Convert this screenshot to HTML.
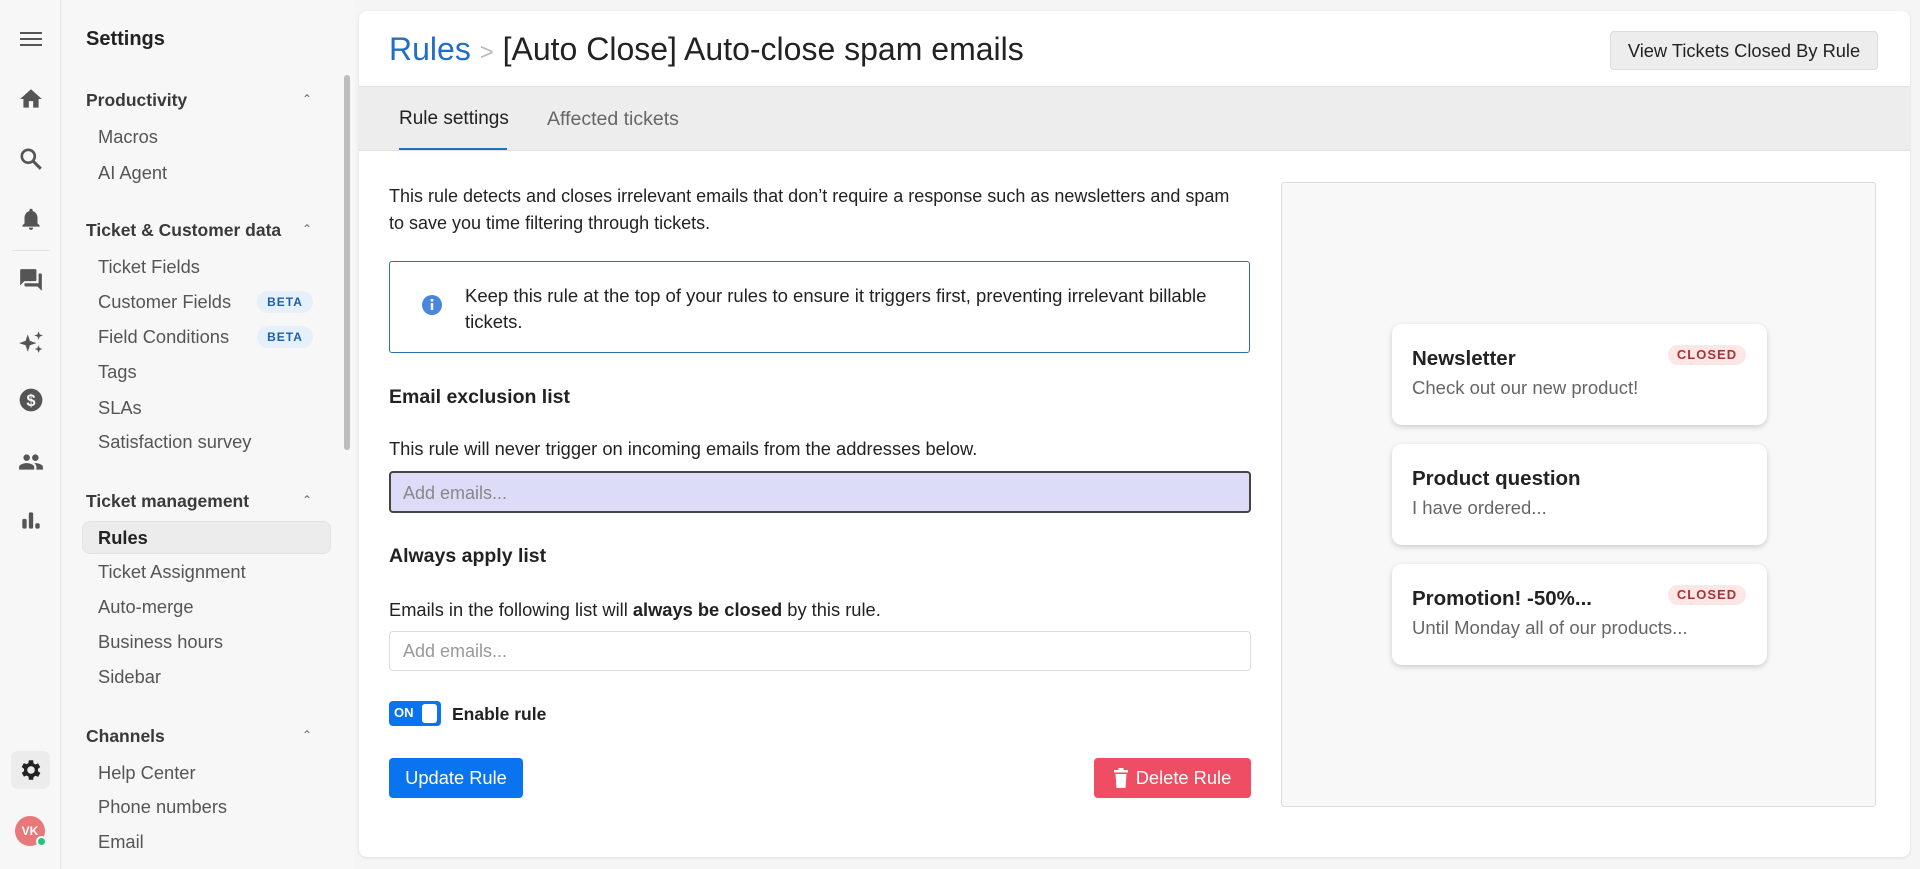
<!DOCTYPE html>
<html><head><meta charset="utf-8"><style>
*{box-sizing:border-box;margin:0;padding:0}
body{width:1920px;height:869px;overflow:hidden;background:#f5f5f5;font-family:"Liberation Sans",sans-serif;color:#1e1e1e;position:relative}
.abs{position:absolute}
.rail{left:0;top:0;width:61px;height:869px;background:#f7f7f7;border-right:1px solid #e6e6e6}
.ic{position:absolute;left:18px;width:26px;height:26px}
.side{left:62px;top:0;width:293px;height:869px;background:#f7f7f7}
.side .h{position:absolute;left:24px;font-size:17.5px;font-weight:bold;color:#3a3a3a;line-height:20px}
.side .i{position:absolute;left:36px;font-size:18.3px;color:#555;line-height:20px}
.chev{position:absolute;left:240px;font-size:12px;color:#666}
.beta{position:absolute;left:195px;width:56px;height:22px;border-radius:11px;background:#e6f0fb;color:#1d5fa8;font-size:12px;font-weight:bold;letter-spacing:1px;text-align:center;line-height:22px}
.card{left:359px;top:11px;width:1551px;height:846px;background:#fff;border-radius:8px;box-shadow:0 1px 3px rgba(0,0,0,.1)}
.btn{position:absolute;border-radius:4px;font-size:18.3px;text-align:center}
.tc{position:absolute;left:1392px;width:375px;height:101px;background:#fff;border-radius:10px;box-shadow:0 2px 6px rgba(0,0,0,.18)}
.tc b{position:absolute;left:20px;top:23px;font-size:20.5px;color:#222}
.tc span{position:absolute;left:20px;top:53px;font-size:18.5px;color:#666}
.tc i{position:absolute;left:276px;top:21px;width:78px;height:20px;border-radius:10px;background:#fde6e6;color:#a33;font-style:normal;font-size:13px;font-weight:bold;letter-spacing:1px;text-align:center;line-height:20px}
</style></head><body>
<div class="abs rail">
<svg class="ic" style="top:26px" viewBox="0 0 26 26"><path d="M2 7h22M2 13h22M2 19h22" stroke="#555" stroke-width="2"/></svg>
<svg class="ic" style="top:86px" viewBox="0 0 24 24"><path d="M10 20v-6h4v6h5v-8h3L12 3 2 12h3v8z" fill="#555"/></svg>
<svg class="ic" style="top:146px" viewBox="0 0 24 24"><circle cx="9.5" cy="9.5" r="6" stroke="#555" stroke-width="2.4" fill="none"/><path d="M14 14l7 7" stroke="#555" stroke-width="2.8"/></svg>
<svg class="ic" style="top:206px" viewBox="0 0 24 24"><path d="M12 22a2 2 0 002-2h-4a2 2 0 002 2zm6-6V11c0-3-1.6-5.6-4.5-6.3V4a1.5 1.5 0 00-3 0v.7C7.6 5.4 6 8 6 11v5l-2 2v1h16v-1z" fill="#555"/></svg>
<div class="abs" style="left:12px;top:250px;width:38px;height:1px;background:#e2e2e2"></div>
<svg class="ic" style="top:267px" viewBox="0 0 24 24"><path d="M21 6h-2v9H6v2c0 .6.4 1 1 1h11l4 4V7c0-.6-.4-1-1-1zm-4 6V3c0-.6-.4-1-1-1H3c-.6 0-1 .4-1 1v14l4-4h10c.6 0 1-.4 1-1z" fill="#555"/></svg>
<svg class="ic" style="top:329px" viewBox="0 0 24 24"><path d="M9 5l2 6 6 2-6 2-2 6-2-6-6-2 6-2zM19 2l1 3 3 1-3 1-1 3-1-3-3-1 3-1zM19 15l1 2.5 2.5 1-2.5 1-1 2.5-1-2.5-2.5-1 2.5-1z" fill="#555"/></svg>
<svg class="ic" style="top:387px" viewBox="0 0 24 24"><circle cx="12" cy="12" r="10.5" fill="#555"/><text x="12" y="17.5" font-size="15" font-weight="bold" fill="#f7f7f7" text-anchor="middle" font-family="Liberation Sans">$</text></svg>
<svg class="ic" style="top:449px" viewBox="0 0 24 24"><path d="M16 11a3 3 0 100-6 3 3 0 000 6zm-8 0a3 3 0 100-6 3 3 0 000 6zm0 2c-2.3 0-7 1.2-7 3.5V19h14v-2.5C15 14.2 10.3 13 8 13zm8 0c-.3 0-.6 0-1 .1 1.2.8 2 2 2 3.4V19h6v-2.5c0-2.3-4.7-3.5-7-3.5z" fill="#555"/></svg>
<svg class="ic" style="top:507px" viewBox="0 0 24 24"><rect x="4" y="11" width="4" height="9" rx="1.5" fill="#555"/><rect x="10" y="5" width="4" height="15" rx="1.5" fill="#555"/><rect x="16" y="15" width="4" height="5" rx="1.5" fill="#555"/></svg>
<div class="abs" style="left:11px;top:751px;width:39px;height:38px;background:#ececec;border-radius:7px"></div>
<svg class="ic" style="top:757px" viewBox="0 0 24 24"><path d="M19.4 13a7.5 7.5 0 000-2l2.1-1.6-2-3.5-2.5 1a7.5 7.5 0 00-1.7-1L15 3h-4l-.4 2.7a7.5 7.5 0 00-1.7 1l-2.5-1-2 3.5L6.6 11a7.5 7.5 0 000 2l-2.1 1.6 2 3.5 2.5-1c.5.4 1.1.7 1.700 1L11 21h4l.4-2.7c.6-.3 1.2-.6 1.7-1l2.5 1 2-3.5zM13 15.5a3.5 3.5 0 110-7 3.5 3.5 0 010 7z" fill="#222" transform="translate(-1 0)"/></svg>
<div class="abs" style="left:15px;top:816px;width:30px;height:30px;border-radius:50%;background:#e8787a;color:#fff;font-size:12px;font-weight:bold;text-align:center;line-height:30px">VK</div>
<div class="abs" style="left:36px;top:836px;width:11px;height:11px;border-radius:50%;background:#22c57a;border:2px solid #f7f7f7"></div>
</div>
<div class="abs side">
<div class="abs" style="left:24px;top:28px;font-size:20px;font-weight:bold;color:#222">Settings</div>
<div class="h" style="top:90px">Productivity</div><div class="chev" style="top:92px">&#8963;</div>
<div class="i" style="top:127px">Macros</div>
<div class="i" style="top:163px">AI Agent</div>
<div class="h" style="top:220px">Ticket &amp; Customer data</div><div class="chev" style="top:222px">&#8963;</div>
<div class="i" style="top:257px">Ticket Fields</div>
<div class="i" style="top:292px">Customer Fields</div><div class="beta" style="top:291px">BETA</div>
<div class="i" style="top:327px">Field Conditions</div><div class="beta" style="top:326px">BETA</div>
<div class="i" style="top:362px">Tags</div>
<div class="i" style="top:398px">SLAs</div>
<div class="i" style="top:432px">Satisfaction survey</div>
<div class="h" style="top:491px">Ticket management</div><div class="chev" style="top:493px">&#8963;</div>
<div class="abs" style="left:20px;top:521px;width:249px;height:33px;background:#ececec;border:1px solid #e2e2e2;border-radius:8px"></div>
<div class="i" style="top:528px;font-weight:bold;color:#222">Rules</div>
<div class="i" style="top:562px">Ticket Assignment</div>
<div class="i" style="top:597px">Auto-merge</div>
<div class="i" style="top:632px">Business hours</div>
<div class="i" style="top:667px">Sidebar</div>
<div class="h" style="top:726px">Channels</div><div class="chev" style="top:728px">&#8963;</div>
<div class="i" style="top:763px">Help Center</div>
<div class="i" style="top:797px">Phone numbers</div>
<div class="i" style="top:832px">Email</div>
<div class="abs" style="left:282px;top:75px;width:6px;height:375px;background:#bdbdbd;border-radius:3px"></div>
</div>
<div class="abs card">
<div class="abs" style="left:30px;top:17px;font-size:32px;line-height:42px;white-space:nowrap"><span style="color:#1f6fc5">Rules</span> <span style="color:#bbb;font-size:24px">&gt;</span> <span style="color:#222">[Auto Close] Auto-close spam emails</span></div>
<div class="btn" style="left:1251px;top:20px;width:268px;height:39px;background:#ededed;border:1px solid #ddd;line-height:37px;color:#222">View Tickets Closed By Rule</div>
<div class="abs" style="left:0;top:75px;width:1551px;height:65px;background:#ededed;border-top:1px solid #e2e2e2;border-bottom:1px solid #e2e2e2"></div>
<div class="abs" style="left:40px;top:97px;font-size:19px;color:#222">Rule settings</div>
<div class="abs" style="left:40px;top:137px;width:108px;height:2px;background:#1f6fc5"></div>
<div class="abs" style="left:188px;top:97px;font-size:19.5px;color:#666">Affected tickets</div>
<div class="abs" style="left:30px;top:172px;width:845px;font-size:18px;line-height:27px;color:#222">This rule detects and closes irrelevant emails that don’t require a response such as newsletters and spam to save you time filtering through tickets.</div>
<div class="abs" style="left:30px;top:250px;width:861px;height:92px;border:1px solid #2f6fa8;border-radius:3px"></div>
<svg class="abs" style="left:62px;top:283px" width="22" height="22" viewBox="0 0 22 22"><circle cx="11" cy="11" r="10" fill="#4a86e0"/><rect x="9.8" y="9" width="2.4" height="7" fill="#fff"/><circle cx="11" cy="6.3" r="1.4" fill="#fff"/></svg>
<div class="abs" style="left:106px;top:272px;width:760px;font-size:18.5px;line-height:26px;color:#222">Keep this rule at the top of your rules to ensure it triggers first, preventing irrelevant billable tickets.</div>
<div class="abs" style="left:30px;top:375px;font-size:19.5px;font-weight:bold;color:#222">Email exclusion list</div>
<div class="abs" style="left:30px;top:427px;font-size:18.3px;color:#222">This rule will never trigger on incoming emails from the addresses below.</div>
<div class="abs" style="left:30px;top:460px;width:862px;height:42px;background:#dcdcf8;border:2px solid #444;border-radius:4px;font-size:18px;color:#888;padding:10px 12px">Add emails...</div>
<div class="abs" style="left:30px;top:534px;font-size:19.5px;font-weight:bold;color:#222">Always apply list</div>
<div class="abs" style="left:30px;top:588px;font-size:18.3px;color:#222">Emails in the following list will <b>always be closed</b> by this rule.</div>
<div class="abs" style="left:30px;top:620px;width:862px;height:40px;border:1px solid #ddd;border-radius:4px;font-size:18px;color:#999;padding:9px 13px">Add emails...</div>
<div class="abs" style="left:30px;top:690px;width:52px;height:25px;background:#0a74f0;border-radius:4px"><span class="abs" style="left:5px;top:4px;color:#fff;font-size:13px;font-weight:bold">ON</span><span class="abs" style="left:33px;top:3px;width:15px;height:19px;background:#fff;border-radius:3px"></span></div>
<div class="abs" style="left:93px;top:693px;font-size:17.5px;font-weight:bold;color:#222">Enable rule</div>
<div class="btn" style="left:30px;top:747px;width:134px;height:40px;background:#0a74f0;color:#fff;line-height:40px">Update Rule</div>
<div class="btn" style="left:735px;top:747px;width:157px;height:40px;background:#ee4d63;color:#fff;line-height:40px;padding-left:22px"><svg class="abs" style="left:19px;top:10px" width="16" height="20" viewBox="0 0 16 20"><rect x="1" y="2" width="14" height="2.5" fill="#fff"/><rect x="5.5" y="0" width="5" height="2.5" fill="#fff"/><path d="M2.5 6h11l-1 14h-9z" fill="#fff"/></svg>Delete Rule</div>
<div class="abs" style="left:922px;top:171px;width:595px;height:625px;background:#f8f8f8;border:1px solid #ddd;border-radius:3px"></div>
</div>
<div class="tc" style="top:324px"><b>Newsletter</b><span>Check out our new product!</span><i>CLOSED</i></div>
<div class="tc" style="top:444px"><b>Product question</b><span>I have ordered...</span></div>
<div class="tc" style="top:564px"><b>Promotion! -50%...</b><span>Until Monday all of our products...</span><i>CLOSED</i></div>
</body></html>
